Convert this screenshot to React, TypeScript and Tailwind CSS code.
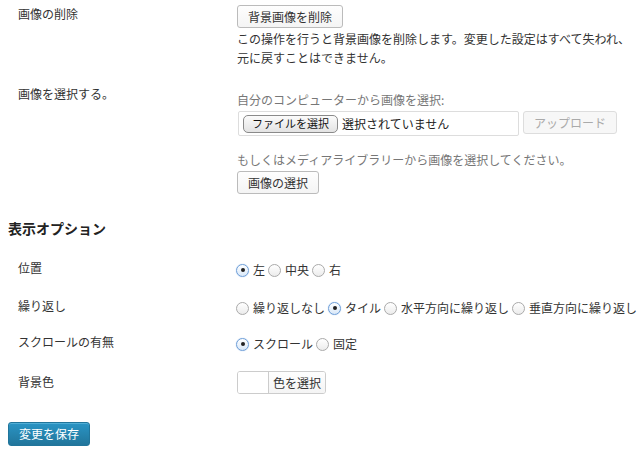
import React from "react";

const btn =
  "inline-flex items-center justify-center h-[23px] px-[10px] rounded-[3px] border border-[#bbbbbb] bg-gradient-to-b from-[#fefefe] to-[#f4f4f4] text-[12px] text-[#333333] leading-none";

const Radio = ({ label, checked }: { label: string; checked?: boolean }) => (
  <label className="inline-flex items-center mr-[3px] whitespace-nowrap">
    <span
      className={`flex items-center justify-center w-[13px] h-[13px] rounded-full border ${
        checked
          ? "border-[#6f9fd8] bg-gradient-to-b from-[#ffffff] to-[#d9e8f8] shadow-[0_0_1px_#8fb6e6]"
          : "border-[#aaaaaa] bg-gradient-to-b from-[#ffffff] to-[#ececec]"
      }`}
    >
      {checked && <span className="w-[4px] h-[4px] rounded-full bg-[#222222]" />}
    </span>
    <span className="ml-[4px]">{label}</span>
  </label>
);

const Row = ({
  label,
  children,
  className = "",
}: {
  label: string;
  children: React.ReactNode;
  className?: string;
}) => (
  <div className={`flex ${className}`}>
    <div className="w-[229px] shrink-0 pl-[10px] leading-[18px]">{label}</div>
    <div className="flex-1 min-w-0">{children}</div>
  </div>
);

export default function App() {
  return (
    <div
      className="w-[639px] h-[457px] overflow-hidden bg-white text-[12px] text-[#333333] pl-[8px]"
      style={{ fontFamily: '"Noto Sans CJK JP", "Noto Sans", sans-serif' }}
    >
      {/* 画像の削除 */}
      <Row label="画像の削除" className="pt-[5px]">
        <button className={btn}>背景画像を削除</button>
        <p className="mt-[1px] leading-[19px]">
          この操作を行うと背景画像を削除します。変更した設定はすべて失われ、元に戻すことはできません。
        </p>
      </Row>

      {/* 画像を選択する。 */}
      <Row label="画像を選択する。" className="pt-[18px]">
        <p className="mt-[6px] leading-[18px] text-[#777777]">自分のコンピューターから画像を選択:</p>
        <div className="flex items-start mt-[2px]">
          <div className="flex items-center w-[281px] h-[25px] ml-[1px] border border-[#dddddd] rounded-[2px] pl-[4px]">
            <span className="inline-flex items-center h-[18px] px-[8px] rounded-[5px] border border-[#8a8a8a] bg-gradient-to-b from-[#fbfbfb] to-[#e3e3e3] text-[11px] text-[#111111] leading-none">
              ファイルを選択
            </span>
            <span className="ml-[4px] text-[#222222]">選択されていません</span>
          </div>
          <span className="inline-flex items-center justify-center h-[23px] w-[94px] ml-[4px] rounded-[3px] border border-[#dddddd] bg-[#f7f7f7] text-[#aaaaaa] leading-none">
            アップロード
          </span>
        </div>
        <p className="mt-[15px] leading-[18px] text-[#777777]">
          もしくはメディアライブラリーから画像を選択してください。
        </p>
        <button className={`${btn} mt-[2px]`}>画像の選択</button>
      </Row>

      <h3 className="mt-[25px] text-[14px] font-bold leading-[18px] text-[#222222]">表示オプション</h3>

      <Row label="位置" className="pt-[22px]">
        <div className="flex items-center leading-[18px] pt-[2px] -ml-[1px]">
          <Radio label="左" checked />
          <Radio label="中央" />
          <Radio label="右" />
        </div>
      </Row>

      <Row label="繰り返し" className="pt-[18px]">
        <div className="flex items-center leading-[18px] pt-[2px] -ml-[1px] whitespace-nowrap">
          <Radio label="繰り返しなし" />
          <Radio label="タイル" checked />
          <Radio label="水平方向に繰り返し" />
          <Radio label="垂直方向に繰り返し" />
        </div>
      </Row>

      <Row label="スクロールの有無" className="pt-[16px]">
        <div className="flex items-center leading-[18px] pt-[2px] -ml-[1px]">
          <Radio label="スクロール" checked />
          <Radio label="固定" />
        </div>
      </Row>

      <Row label="背景色" className="pt-[20px]">
        <div className="flex h-[23px] w-[89px] -mt-[2px] rounded-[3px] border border-[#cccccc] overflow-hidden">
          <span className="w-[31px] bg-white border-r border-[#cccccc]" />
          <span className="flex-1 flex items-center justify-center bg-gradient-to-b from-[#fefefe] to-[#f4f4f4] text-[12px] text-[#333333]">
            色を選択
          </span>
        </div>
      </Row>

      <button className="mt-[28px] h-[24px] w-[82px] rounded-[3px] border border-[#21759b] bg-gradient-to-b from-[#2a95c5] to-[#21759b] text-[12px] text-white leading-none shadow-[inset_0_1px_0_rgba(120,200,230,0.5)]">
        変更を保存
      </button>
    </div>
  );
}
